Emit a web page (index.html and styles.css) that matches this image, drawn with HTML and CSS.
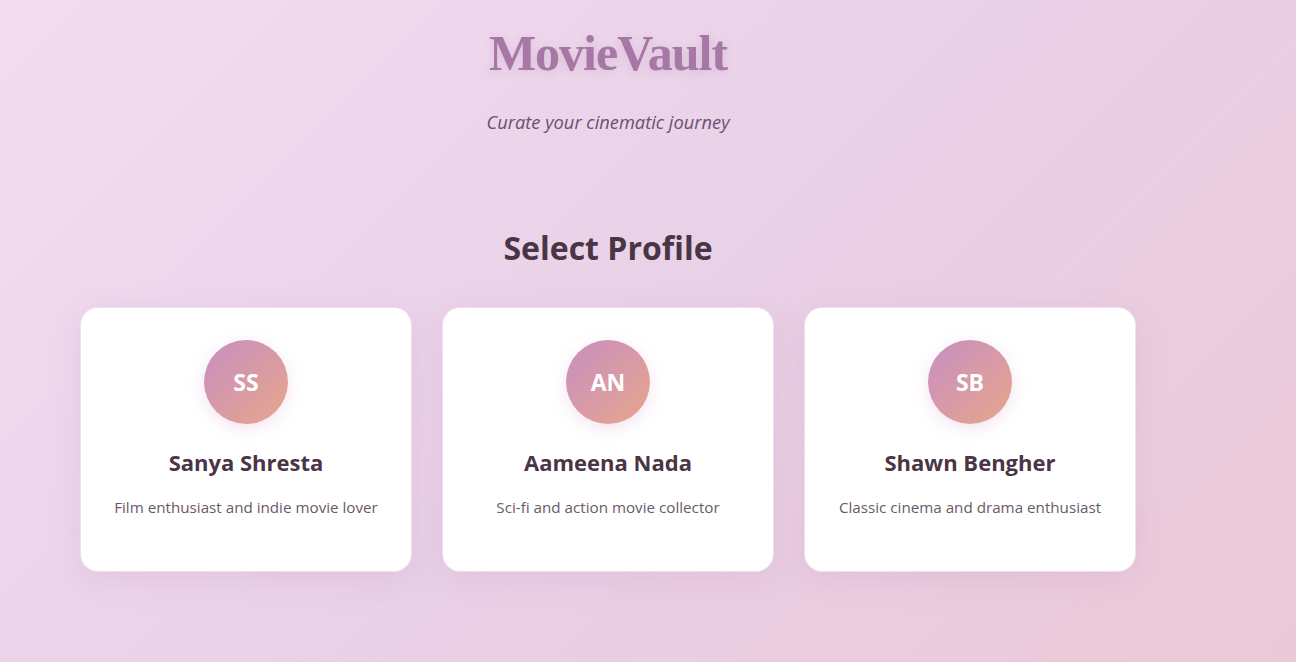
FILE: index.html
```html
<!DOCTYPE html>
<html lang="en">
<head>
<meta charset="utf-8">
<title>MovieVault</title>
<link rel="stylesheet" href="styles.css">
</head>
<body>
<div class="page">
  <header class="header">
    <h1 class="logo">MovieVault</h1>
    <p class="tagline">Curate your cinematic journey</p>
  </header>
  <main class="profiles">
    <h2 class="section-title">Select Profile</h2>
    <div class="grid">
      <div class="card">
        <div class="avatar">SS</div>
        <h3 class="name">Sanya Shresta</h3>
        <p class="desc">Film enthusiast and indie movie lover</p>
      </div>
      <div class="card">
        <div class="avatar">AN</div>
        <h3 class="name">Aameena Nada</h3>
        <p class="desc">Sci-fi and action movie collector</p>
      </div>
      <div class="card">
        <div class="avatar">SB</div>
        <h3 class="name">Shawn Bengher</h3>
        <p class="desc">Classic cinema and drama enthusiast</p>
      </div>
    </div>
  </main>
</div>
</body>
</html>
```
FILE: styles.css
```css
html, body {
  margin: 0;
  padding: 0;
}
body {
  min-height: 100vh;
  background: linear-gradient(135deg, #f2ddf0 0%, #e9d1e8 50%, #ecc9d6 100%);
  font-family: "Open Sans", "Noto Sans", sans-serif;
  overflow: hidden;
}
.page {
  width: 1056px;
  margin-left: 80px;
  padding-top: 23px;
}
.header {
  text-align: center;
}
.logo {
  margin: 0;
  font-family: "Liberation Serif", serif;
  font-weight: 700;
  font-size: 50px;
  line-height: 60px;
  letter-spacing: -1px;
  color: #a678a4;
  text-shadow: 0 2px 8px rgba(168, 120, 166, 0.25);
}
.tagline {
  margin: 26px 0 0;
  font-style: italic;
  font-size: 18.3px;
  line-height: 25px;
  color: #6b5070;
}
.profiles {
  margin-top: 94px;
}
.section-title {
  margin: 0;
  text-align: center;
  font-size: 32px;
  line-height: 40px;
  font-weight: 700;
  color: #4a3545;
}
.grid {
  display: grid;
  grid-template-columns: repeat(3, 1fr);
  gap: 30px;
  margin-top: 39px;
}
.card {
  background: #ffffff;
  border-radius: 18px;
  border: 1px solid #f0dff0;
  box-shadow: 0 8px 30px rgba(200, 150, 200, 0.25);
  height: 265px;
  box-sizing: border-box;
  padding-top: 32px;
  display: flex;
  flex-direction: column;
  align-items: center;
  text-align: center;
}
.avatar {
  width: 84px;
  height: 84px;
  border-radius: 50%;
  background: linear-gradient(135deg, #c78fc2 0%, #e8a58a 100%);
  box-shadow: 0 4px 16px rgba(220, 160, 210, 0.3);
  color: #fff;
  font-weight: 700;
  font-size: 23px;
  display: flex;
  align-items: center;
  justify-content: center;
}
.name {
  margin: 23px 0 0;
  font-size: 22px;
  line-height: 30px;
  font-weight: 700;
  color: #4a3545;
}
.desc {
  margin: 20px 0 0;
  font-size: 15.2px;
  line-height: 21px;
  color: #6a5a68;
}
```
